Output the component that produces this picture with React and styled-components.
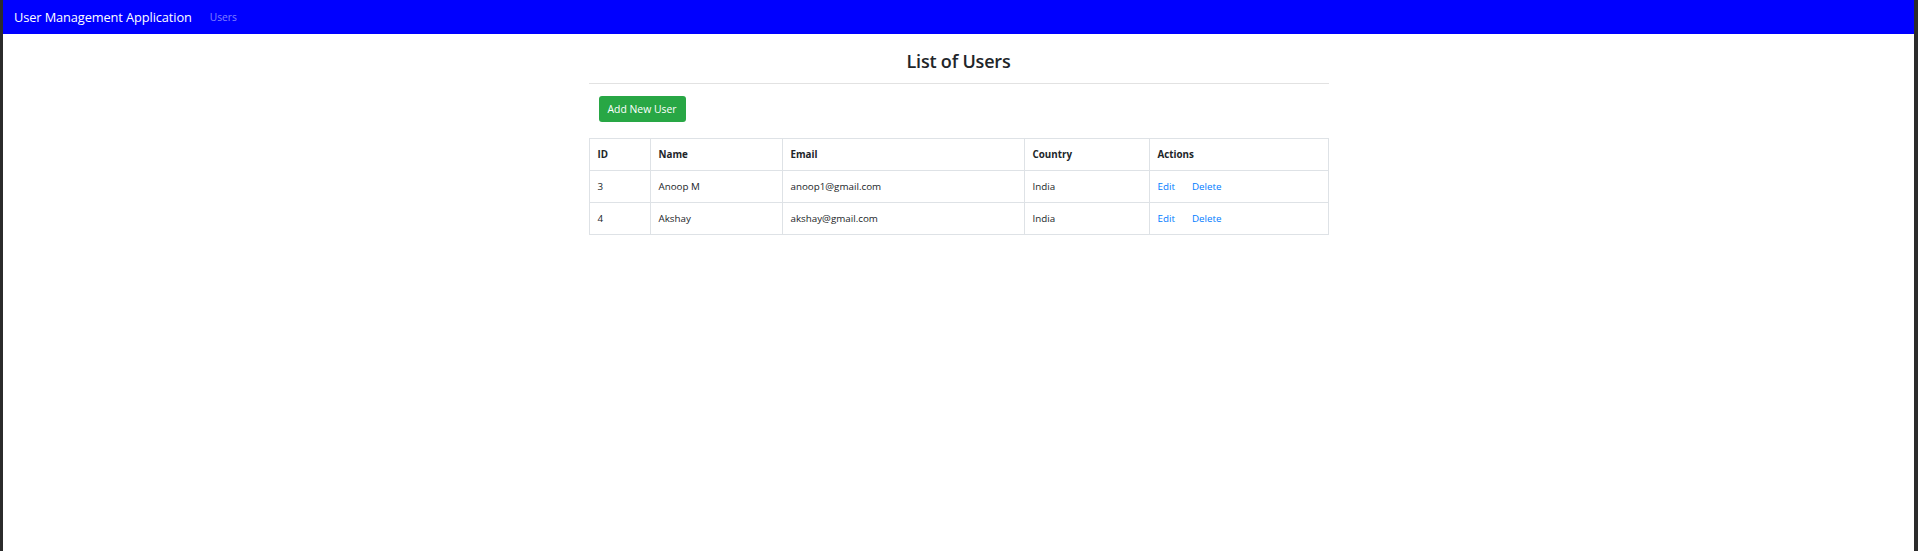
import React from "react";
import styled, { createGlobalStyle } from "styled-components";

const users = [
    { id: 3, name: "Anoop M", email: "anoop1@gmail.com", country: "India" },
    { id: 4, name: "Akshay", email: "akshay@gmail.com", country: "India" },
];

// column widths as drawn in the screenshot
const columns = [
    { label: "ID", width: 61 },
    { label: "Name", width: 132 },
    { label: "Email", width: 242 },
    { label: "Country", width: 125 },
    { label: "Actions", width: 179 },
];

const GlobalStyle = createGlobalStyle`
    html, body {
        margin: 0;
        padding: 0;
        background: #2b2b2b;
    }
    body {
        font-family: "Open Sans", "Noto Sans", sans-serif;
        color: #212529;
    }
`;

const Frame = styled.div`
    height: 551px;
    margin: 0 4px 0 3px;
    background: #fff;
    overflow: hidden;
`;

const Navbar = styled.nav`
    height: 34px;
    background: #0000ff;
    display: flex;
    align-items: center;
    padding: 0 11px;
    gap: 18px;
`;

const Brand = styled.a`
    color: #fff;
    font-size: 12.8px;
    text-decoration: none;
    letter-spacing: -0.1px;
`;

const NavLink = styled.a`
    color: rgba(255, 255, 255, 0.5);
    font-size: 10.2px;
    text-decoration: none;
`;

const Container = styled.div`
    width: 740px;
    margin: 0 auto;
    padding-top: 9px;
`;

const Title = styled.h3`
    margin: 0;
    height: 36px;
    display: flex;
    align-items: center;
    justify-content: center;
    font-size: 18px;
    font-weight: 600;
    letter-spacing: -0.2px;
`;

const Rule = styled.hr`
    margin: 4px 0 12px;
    border: 0;
    border-top: 1px solid #e2e2e2;
`;

const Toolbar = styled.div`
    padding: 0 10px;
    margin-bottom: 16px;
`;

const Button = styled.a`
    display: inline-flex;
    align-items: center;
    justify-content: center;
    height: 26px;
    padding: 0 9px;
    background: #28a745;
    color: #fff;
    border-radius: 3px;
    font-size: 10.4px;
    text-decoration: none;
`;

const Table = styled.table`
    width: 740px;
    border-collapse: collapse;
    table-layout: fixed;
    font-size: 9.8px;
`;

const Cell = styled.td`
    border: 1px solid #dee2e6;
    padding: 0 8px;
    height: 31px;
    text-align: left;
    vertical-align: middle;
    font-weight: ${(p) => (p.head ? 700 : 400)};
    white-space: nowrap;
`;

const Action = styled.a`
    color: #007bff;
    text-decoration: none;
    margin-right: ${(p) => (p.gap ? "17px" : "0")};
`;

const App = () => {
    return (
        <>
            <GlobalStyle />
            <Frame>
                <Navbar>
                    <Brand href="#">User Management Application</Brand>
                    <NavLink href="#">Users</NavLink>
                </Navbar>
                <Container>
                    <Title>List of Users</Title>
                    <Rule />
                    <Toolbar>
                        <Button href="#">Add New User</Button>
                    </Toolbar>
                    <Table>
                        <colgroup>
                            {columns.map((c) => (
                                <col key={c.label} style={{ width: c.width }} />
                            ))}
                        </colgroup>
                        <thead>
                            <tr>
                                {columns.map((c) => (
                                    <Cell as="th" head key={c.label}>{c.label}</Cell>
                                ))}
                            </tr>
                        </thead>
                        <tbody>
                            {users.map((u) => (
                                <tr key={u.id}>
                                    <Cell>{u.id}</Cell>
                                    <Cell>{u.name}</Cell>
                                    <Cell>{u.email}</Cell>
                                    <Cell>{u.country}</Cell>
                                    <Cell>
                                        <Action href="#" gap>Edit</Action>
                                        <Action href="#">Delete</Action>
                                    </Cell>
                                </tr>
                            ))}
                        </tbody>
                    </Table>
                </Container>
            </Frame>
        </>
    );
};

export default App;
